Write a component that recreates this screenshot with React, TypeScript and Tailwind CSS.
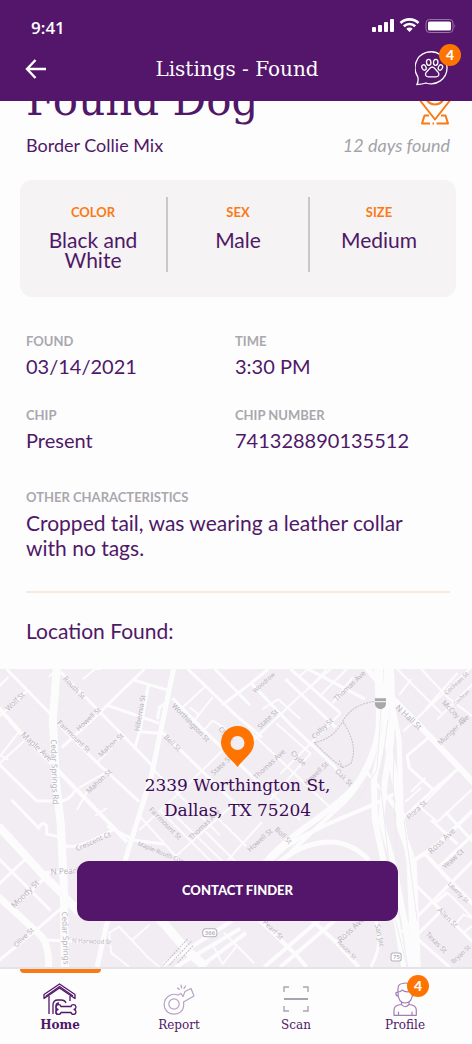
import React from "react";

const SLAB = "font-['DejaVu_Serif',serif]";

type Road = { d: string; w: number };

const ROADS: Road[] = [
  { d: "M58 0L54 50L57 110L62 155L65 217L66 296", w: 8 },
  { d: "M8 0L52 45", w: 3 },
  { d: "M0 38L20 61L48 89L70 112L110 153L128 172", w: 4 },
  { d: "M28 22L0 48M10 8L0 18M20 63L2 86L10 90M26 71L0 95", w: 2 },
  { d: "M0 94L38 131H62Q70 131 76 121", w: 3 },
  { d: "M13 130L40 158Q44 150 48 156V164L62 167", w: 3 },
  { d: "M62 3L153 96", w: 3 },
  { d: "M174 0L152 106L125 193L107 256L98 296", w: 5 },
  { d: "M145 0L103 41L63 78", w: 3 },
  { d: "M108 36L160 54M135 11L168 21M138 62L163 64M158 50L160 38L166 34", w: 3 },
  { d: "M149 16L141 60L135 80", w: 3 },
  { d: "M60 55L98 93L140 132", w: 3 },
  { d: "M98 93L122 68M80 118L108 102M88 122L78 140M96 146L108 138", w: 2 },
  { d: "M173 29L205 62L240 95L262 116", w: 3 },
  { d: "M187 -1L236 46L262 68", w: 3 },
  { d: "M215 0L250 36", w: 3 },
  { d: "M207 16L180 41M213 28L193 53M190 38L200 46M205 60L213 51L232 64", w: 2 },
  { d: "M163 63L207 106L250 148", w: 3 },
  { d: "M230 74L170 132L140 160M152 98L200 145L220 165", w: 2 },
  { d: "M50 8L58 0M84 10L96 0H102", w: 2 },
  { d: "M222 36L251 14L268 0", w: 3 },
  { d: "M251 14L290 55L333 96L345 110", w: 3 },
  { d: "M252 72L298 28L330 0M262 40L278 30L300 50M250 62L290 100", w: 2 },
  { d: "M290 0L340 44M300 -4L364 30M285 10L335 58", w: 3 },
  { d: "M310 18L326 0M320 26L346 0M332 34L352 8M298 8L312 -4", w: 2 },
  { d: "M340 44L316 68L280 104M276 54L310 84L270 130", w: 2 },
  { d: "M290 100L330 138M265 118L300 150", w: 2 },
  { d: "M360 -8L395 33L420 58L472 113", w: 6 },
  { d: "M402 62L440 26L472 -4M424 40L456 4M436 50L472 14M396 0L440 44", w: 2 },
  { d: "M420 0L446 28L472 48M410 10L398 26", w: 2 },
  { d: "M430 66L406 86L408 98L432 120L458 98M432 120L404 146L388 128", w: 3 },
  { d: "M410 122L424 108M404 132L420 118M458 98L410 146", w: 2 },
  { d: "M376 0C378 50 384 66 360 108C340 140 290 160 262 196", w: 6 },
  { d: "M380 0C382 70 374 100 344 132C322 152 300 172 276 196", w: 4 },
  { d: "M386 0L384 60L373 110L374 150L383 193L396 253L403 296", w: 6 },
  { d: "M390 0L392 60L384 110L380 150L392 193L404 253L410 296", w: 6 },
  { d: "M382 20L388 80L398 130L399 156L412 193L416 296", w: 7 },
  { d: "M386 10L398 70L400 140L408 193L412 296", w: 5 },
  { d: "M270 200C300 170 340 160 368 190", w: 5 },
  { d: "M400 120C370 140 330 148 286 176L262 198", w: 4 },
  { d: "M362 98L384 124L402 150", w: 3 },
  { d: "M0 156L43 203L63 223L80 242", w: 8 },
  { d: "M0 226L40 263Q50 270 50 296", w: 7 },
  { d: "M0 188L26 214L52 240M0 214L30 186M14 238L50 204M40 203L76 200", w: 3 },
  { d: "M0 290L32 264L62 238L78 232M42 269L104 272", w: 3 },
  { d: "M62 176H78Q98 170 116 158M108 156L135 170L165 174", w: 3 },
  { d: "M140 146L180 190M160 140L212 192M176 146L232 200M176 186L236 132", w: 2 },
  { d: "M110 262L120 256L148 286L160 296M133 269L150 254M110 262L112 282L130 296", w: 2 },
  { d: "M160 248L190 282L206 296", w: 9 },
  { d: "M164 294L232 250M176 296L240 258M200 296L246 262", w: 4 },
  { d: "M224 262L254 292M214 276L222 292M236 276L222 294", w: 2 },
  { d: "M258 248L296 284L306 296M264 296L320 248M280 296L336 248M310 248L336 272L358 296", w: 4 },
  { d: "M374 248Q384 270 370 296M336 272L346 262", w: 3 },
  { d: "M204 160L240 196M216 146L246 176M228 190Q236 180 262 152", w: 2 },
  { d: "M413 190L434 176L472 140M424 184L450 212L472 234", w: 4 },
  { d: "M450 212L472 190M450 212L400 262M414 214L440 240L472 272M438 196L472 164", w: 3 },
  { d: "M430 150L456 174M444 142L472 172M434 232L446 222M440 240L414 266L448 296", w: 3 },
  { d: "M452 256L462 244L472 248M462 262L472 254M446 222L472 248", w: 2 },
  { d: "M420 138L436 152L470 120", w: 2 },
];

const LABELS: { t: string; x: number; y: number; r: number; s?: number }[] = [
  { t: "Cedar Springs Rd", x: 52, y: 70, r: 88, s: 8 },
  { t: "Cedar Springs", x: 63, y: 241, r: 88, s: 8 },
  { t: "Maple Ave", x: 22, y: 66, r: 43, s: 8 },
  { t: "Wolf St", x: 10, y: 42, r: -44 },
  { t: "Routh St", x: 64, y: 10, r: 46 },
  { t: "Fairmount St", x: 58, y: 54, r: 44 },
  { t: "Howell St", x: 80, y: 62, r: -43 },
  { t: "Mahon St", x: 102, y: 88, r: -43 },
  { t: "Mahon St", x: 90, y: 124, r: -43 },
  { t: "Hibernia St", x: 140, y: 62, r: -80 },
  { t: "Worthington St", x: 172, y: 37, r: 46 },
  { t: "Bell St", x: 164, y: 68, r: 45 },
  { t: "State St", x: 214, y: 106, r: -43 },
  { t: "Clyde", x: 218, y: 60, r: 45 },
  { t: "Fairmount St", x: 149, y: 140, r: 45 },
  { t: "Woodrow", x: 255, y: 24, r: -42, s: 6 },
  { t: "State St", x: 260, y: 60, r: -43 },
  { t: "Thomas Ave", x: 336, y: 32, r: -43, s: 7 },
  { t: "Colby St", x: 314, y: 70, r: -44 },
  { t: "Thomas Ave", x: 256, y: 110, r: -43 },
  { t: "Clyde", x: 290, y: 84, r: 45 },
  { t: "Oak St", x: 334, y: 102, r: 45 },
  { t: "Howell St", x: 306, y: 116, r: -43 },
  { t: "N Hall St", x: 394, y: 39, r: 43, s: 8 },
  { t: "Cochran St", x: 445, y: 26, r: -43, s: 6 },
  { t: "Cochran", x: 454, y: 36, r: -43, s: 5 },
  { t: "McCoy Pl", x: 440, y: 34, r: 45, s: 7 },
  { t: "Munger Ave", x: 439, y: 76, r: -43, s: 7 },
  { t: "Flora St", x: 408, y: 150, r: -43 },
  { t: "Crescent Ct", x: 78, y: 181, r: -24 },
  { t: "Maple-Routh Conn", x: 138, y: 175, r: 22, s: 6 },
  { t: "N Pearl St", x: 52, y: 204, r: -2, s: 8 },
  { t: "Moody St", x: 16, y: 238, r: -45, s: 8 },
  { t: "Olive St", x: 18, y: 277, r: -44 },
  { t: "N Harwood St", x: 73, y: 272, r: 2, s: 6 },
  { t: "Howell St", x: 250, y: 182, r: -42 },
  { t: "Boll St", x: 274, y: 160, r: 44 },
  { t: "Thomas Ave", x: 192, y: 170, r: -44 },
  { t: "Ross Ave", x: 430, y: 184, r: -43, s: 8 },
  { t: "Yeaw Ct", x: 444, y: 199, r: -43 },
  { t: "Liberty St", x: 446, y: 214, r: 45, s: 6 },
  { t: "Allen St", x: 436, y: 240, r: 45 },
  { t: "Texas St", x: 424, y: 264, r: 45 },
  { t: "Ross Ave", x: 340, y: 272, r: -43, s: 8 },
  { t: "Routh St", x: 336, y: 272, r: 45, s: 6 },
  { t: "San Jac", x: 374, y: 254, r: 78 },
  { t: "Pearl St", x: 262, y: 252, r: 44 },
  { t: "Bryan St", x: 452, y: 293, r: -43, s: 6 },
];

function StreetMap() {
  return (
    <svg
      className="absolute inset-0 h-full w-full"
      viewBox="0 0 472 296"
      preserveAspectRatio="xMidYMid slice"
      aria-hidden="true"
    >
      <rect width="472" height="296" fill="#f1edf3" />
      <g fill="none" stroke="#fdfcfd" strokeLinejoin="round">
        {ROADS.map((r, i) => (
          <path key={i} d={r.d} strokeWidth={r.w} />
        ))}
      </g>
      <g fill="none" stroke="#eeebf0" strokeWidth="1">
        <path d="M380 40L376 100L350 140M387 50L379 110L388 193M394 60L392 110L396 190M403 150L416 250M386 248L398 296M394 248L406 296" />
      </g>
      <g fill="none" stroke="#c4c0c7" strokeWidth="1" strokeDasharray="2 1">
        <path d="M376 32Q352 34 342 52Q358 76 350 94L342 98Q326 86 314 73Q332 70 342 52M342 98L338 90" />
        <path d="M164 294L188 268M170 294L192 270M178 292L194 274" />
      </g>
      <g fontFamily="'Noto Sans', sans-serif" fill="#b9b5bc">
        {LABELS.map((l, i) => (
          <text key={i} fontSize={l.s ?? 7} transform={`translate(${l.x} ${l.y}) rotate(${l.r})`}>
            {l.t}
          </text>
        ))}
      </g>
      <g>
        <path d="M374 29h11v5q0 5-5.500 6q-5.500-1-5.500-6z" fill="#a9a6ac" />
        <path d="M374 32.500h11" stroke="#fff" />
        <rect x="203" y="258" width="14" height="8" rx="3" fill="#fff" stroke="#b3afb6" />
        <text x="205" y="264" fontSize="6" fill="#99959c" fontFamily="'Noto Sans', sans-serif">366</text>
        <rect x="390" y="282" width="10" height="8" rx="2" fill="#fff" stroke="#b3afb6" />
        <text x="392" y="288" fontSize="6" fill="#99959c" fontFamily="'Noto Sans', sans-serif">75</text>
      </g>
    </svg>
  );
}

function Badge({ className }: { className: string }) {
  return (
    <span
      className={`absolute flex size-[22px] items-center justify-center rounded-full bg-[#ff7300] font-[Lato,sans-serif] text-sm font-black text-white ${className}`}
    >
      4
    </span>
  );
}

function StatusIcons() {
  return (
    <svg width="86" height="16" viewBox="0 0 86 16" fill="none" aria-hidden="true">
      <g fill="#fff">
        <rect x="0" y="9" width="4" height="5" rx="1" />
        <rect x="6" y="7" width="4" height="7" rx="1" />
        <rect x="12" y="4" width="4" height="10" rx="1" />
        <rect x="18" y="1" width="4" height="13" rx="1" />
        <path d="M37.500 14l-3.200-3.200a4.600 4.600 0 0 1 6.400 0z" />
      </g>
      <path d="M28.500 5a13 13 0 0 1 18 0M31.800 8.300a8.300 8.300 0 0 1 11.400 0" stroke="#fff" strokeWidth="2.600" />
      <rect x="54" y="1.500" width="27" height="13" rx="3.500" stroke="#9a74a8" />
      <rect x="56" y="3.500" width="23" height="9" rx="1.500" fill="#fff" />
      <path d="M82.500 6q1.600 2 0 4z" fill="#9a74a8" />
    </svg>
  );
}

function PawChatIcon() {
  return (
    <svg width="34" height="35" viewBox="0 0 34 35" fill="none" stroke="#fff" strokeWidth="1.300" strokeLinejoin="round" aria-hidden="true">
      <path d="M2.800 25.800A16 16 0 1 1 11 32Q7.500 33.200 1.800 33.600Q3.800 30.500 2.800 25.800z" />
      <ellipse cx="9" cy="16.500" rx="2" ry="2.800" transform="rotate(-28 9 16.500)" />
      <ellipse cx="13.700" cy="11.300" rx="2.200" ry="3" transform="rotate(-8 13.700 11.300)" />
      <ellipse cx="20.700" cy="11.300" rx="2.200" ry="3" transform="rotate(8 20.700 11.300)" />
      <ellipse cx="25.400" cy="16.500" rx="2" ry="2.800" transform="rotate(28 25.400 16.500)" />
      <path d="M17.200 16c2.600 0 3 2.600 5.500 4.800 2.200 2.200 1.300 5-1.600 5H13.300c-2.900 0-3.800-2.800-1.600-5 2.500-2.200 2.900-4.800 5.500-4.800z" />
    </svg>
  );
}

function MapPinIcon() {
  return (
    <svg width="34" height="50" viewBox="0 0 34 50" fill="none" stroke="#f97a14" strokeWidth="2" strokeLinejoin="round" aria-hidden="true">
      <path d="M17 42.500L2.500 24A16 16 0 1 1 31.500 24z" />
      <circle cx="17" cy="17.500" r="10" />
      <path d="M11 38.500H6.500L4 46.500H12M14.500 46.500H16M18.500 46.500H30L27.500 38.500H23" />
    </svg>
  );
}

function HomeIcon() {
  return (
    <svg width="34" height="32" viewBox="0 0 34 32" fill="none" stroke="#54166b" strokeWidth="1.300" strokeLinejoin="round" aria-hidden="true">
      <path d="M1 11.500L16.500 1L32 11.500V15.500L16.500 5L1 15.500z" />
      <path d="M6 13V31M27 13V18M2.500 13.500L16.500 3.500L30 13" />
      <path d="M10 31V22Q10 17 15 17H18Q22 17 23 20M13 31V23Q13 20 16 20M13 31H16" />
      <path d="M18 23.500a2.500 2.500 0 1 0-3 3 2.500 2.500 0 1 0 3 3H28a2.500 2.500 0 1 0 3-3 2.500 2.500 0 1 0-3-3z" fill="#fdfdfd" />
    </svg>
  );
}

function WhistleIcon() {
  return (
    <svg width="32" height="31" viewBox="0 0 32 31" fill="none" stroke="#b5a3c3" strokeWidth="1.200" strokeLinejoin="round" strokeLinecap="round" aria-hidden="true">
      <circle cx="11" cy="20" r="5.200" />
      <path d="M15 11L18 9.500L20 12.500L22 7.500L28 4.500L31 12L20.500 18Q22 27 14 29.700Q5 31.500 1.700 24Q-.5 15 7.500 11Q11 9.500 15 11" />
      <path d="M14.500 4L16.500 5.500M18 1L18.700 4M22.500 2L21 4.500" />
    </svg>
  );
}

function ScanIcon() {
  return (
    <svg width="26" height="26" viewBox="0 0 26 26" fill="none" stroke="#aaa3b3" strokeWidth="1.400" aria-hidden="true">
      <path d="M1 6V1H6M20 1H25V6M1 20V25H6M20 25H25V20" />
      <path d="M1 13H25" strokeWidth="2" />
    </svg>
  );
}

function PersonIcon() {
  return (
    <svg width="24" height="34" viewBox="0 0 24 34" fill="none" stroke="#a27fb3" strokeWidth="1.200" strokeLinejoin="round" strokeLinecap="round" aria-hidden="true">
      <path d="M5 11V7Q5 1.500 10 1.500Q12 .5 15 1.500Q19.500 2.500 19.500 7V11M5 10Q8 10 9 8Q13 11 19 9M5 10Q2.500 10 3 12Q3 14 5 14M19.500 10Q22 10 21.500 12Q21 14 19.500 14M5 11Q5 20.500 12.200 21Q19.500 20.500 19.500 11" />
      <path d="M8.500 20V22.500Q12 27 16 22.500V20M8.500 22.500Q1 23 1 28V33.300H23.300V28Q23.300 23 16 22.500M5.500 30V33M19 30V33" />
    </svg>
  );
}

function Field({ label, value, prose = false }: { label: string; value: string; prose?: boolean }) {
  return (
    <div>
      <dt className="text-[13px] leading-4 font-bold text-[#a9a8ae]">{label}</dt>
      <dd className={`mt-[5px] leading-[25px] ${prose ? "pr-8 text-[21px]" : "text-xl"}`}>{value}</dd>
    </div>
  );
}

function Trait({ label, value }: { label: string; value: string }) {
  return (
    <div className="px-6 pb-0.5">
      <dt className="pt-[7px] text-[13px] leading-4 font-bold text-[#fa7a16]">{label}</dt>
      <dd className="mt-[10px] text-[21px] leading-5">{value}</dd>
    </div>
  );
}

const TABS = [
  { label: "Home", icon: <HomeIcon />, active: true },
  { label: "Report", icon: <WhistleIcon /> },
  { label: "Scan", icon: <ScanIcon /> },
  { label: "Profile", icon: <PersonIcon />, badge: true },
];

export default function App() {
  return (
    <div className="flex min-h-screen flex-col bg-[#fdfdfd] font-[Lato,sans-serif] text-[#4f1868]">
      <header className="sticky top-0 z-10 bg-[#54166b] pb-[15px] text-white">
        <div className="flex items-start justify-between pt-[18px] pr-[14px] pl-[31px]">
          <span className="font-['Open_Sans',sans-serif] text-[17px] leading-5 font-semibold">9:41</span>
          <StatusIcons />
        </div>
        <div className="mt-[13px] grid grid-cols-[1fr_auto_1fr] items-center pr-[23px] pl-[25px]">
          <button type="button" aria-label="Back" className="justify-self-start">
            <svg width="22" height="20" viewBox="0 0 22 20" fill="none" stroke="#fff" strokeWidth="2.400" aria-hidden="true">
              <path d="M10.500 1L2 10L10.500 19M2 10H21" />
            </svg>
          </button>
          <h1 className={`${SLAB} text-xl leading-6`}>Listings - Found</h1>
          <button type="button" aria-label="Messages" className="relative justify-self-end">
            <PawChatIcon />
            <Badge className="-top-[7px] -right-3" />
          </button>
        </div>
      </header>

      <main className="-mt-[26px] flex grow flex-col">
        <div className="pr-5 pl-[26px]">
          <div className="flex items-end justify-between">
            <h2 className={`${SLAB} text-[42px] leading-[52px]`}>Found Dog</h2>
            <MapPinIcon />
          </div>
          <div className="mt-1.5 flex items-center justify-between text-lg leading-6">
            <p>Border Collie Mix</p>
            <p className="pr-0.5 text-[#a3a3a8] italic">12 days found</p>
          </div>
        </div>

        <dl className="mt-[23px] mr-4 ml-5 grid grid-cols-[148fr_142fr_138fr] divide-x-2 divide-[#c9c7ca] rounded-xl bg-[#f5f3f4] pt-[17px] pr-2 pb-[25px] text-center">
          <Trait label="COLOR" value="Black and White" />
          <Trait label="SEX" value="Male" />
          <Trait label="SIZE" value="Medium" />
        </dl>

        <div className="pr-[22px] pl-[26px]">
          <dl className="mt-9 grid grid-cols-[209fr_215fr] gap-y-7">
            <Field label="FOUND" value="03/14/2021" />
            <Field label="TIME" value="3:30 PM" />
            <Field label="CHIP" value="Present" />
            <Field label="CHIP NUMBER" value="741328890135512" />
            <div className="col-span-2 mt-2">
              <Field
                prose
                label="OTHER CHARACTERISTICS"
                value="Cropped tail, was wearing a leather collar with no tags."
              />
            </div>
          </dl>
          <hr className="mt-[31px] border-t-2 border-[#fde6dd]" />
          <h3 className="my-[26px] text-[21px] leading-6">Location Found:</h3>
        </div>

        <section className="relative grow overflow-hidden" aria-label="Location map">
          <StreetMap />
          <div className="relative flex flex-col items-center pt-[57px] pr-[74px] pb-11 pl-[77px]">
            <svg width="33" height="41" viewBox="0 0 33 41" aria-hidden="true">
              <path d="M16.500 0A16.500 16.500 0 0 0 0 16.500C0 27 10 32 16.500 41C23 32 33 27 33 16.500A16.500 16.500 0 0 0 16.500 0zM16.500 10a7 7 0 1 1 0 14a7 7 0 0 1 0-14z" fill="#ff7300" fillRule="evenodd" />
            </svg>
            <address className={`${SLAB} mt-[6px] text-center text-[17px] leading-[25px] text-[#3d0a57] not-italic`}>
              2339 Worthington St,
              <br />
              Dallas, TX 75204
            </address>
            <button type="button" className="mt-[38px] h-[60px] w-full rounded-xl bg-[#54166b] text-[13px] font-black text-white">
              CONTACT FINDER
            </button>
          </div>
        </section>
      </main>

      <nav className="sticky bottom-0 border-t-2 border-[#e6e3e8] bg-[#fdfdfd]">
        <ul className="grid grid-cols-[120fr_118fr_116fr_102fr] pr-4">
          {TABS.map((tab) => (
            <li key={tab.label}>
              <a href={`#${tab.label.toLowerCase()}`} className="relative flex h-[75px] flex-col items-center">
                {tab.active && <span className="absolute top-0 h-1 w-[81px] rounded-b-sm bg-[#f97a14]" />}
                <span className="relative mt-3 flex h-[36px] items-center justify-center">
                  {tab.icon}
                  {tab.badge && <Badge className="-top-[6px] -right-3" />}
                </span>
                <span className={`${SLAB} text-xs leading-4 ${tab.active ? "font-bold" : ""}`}>{tab.label}</span>
              </a>
            </li>
          ))}
        </ul>
      </nav>
    </div>
  );
}
